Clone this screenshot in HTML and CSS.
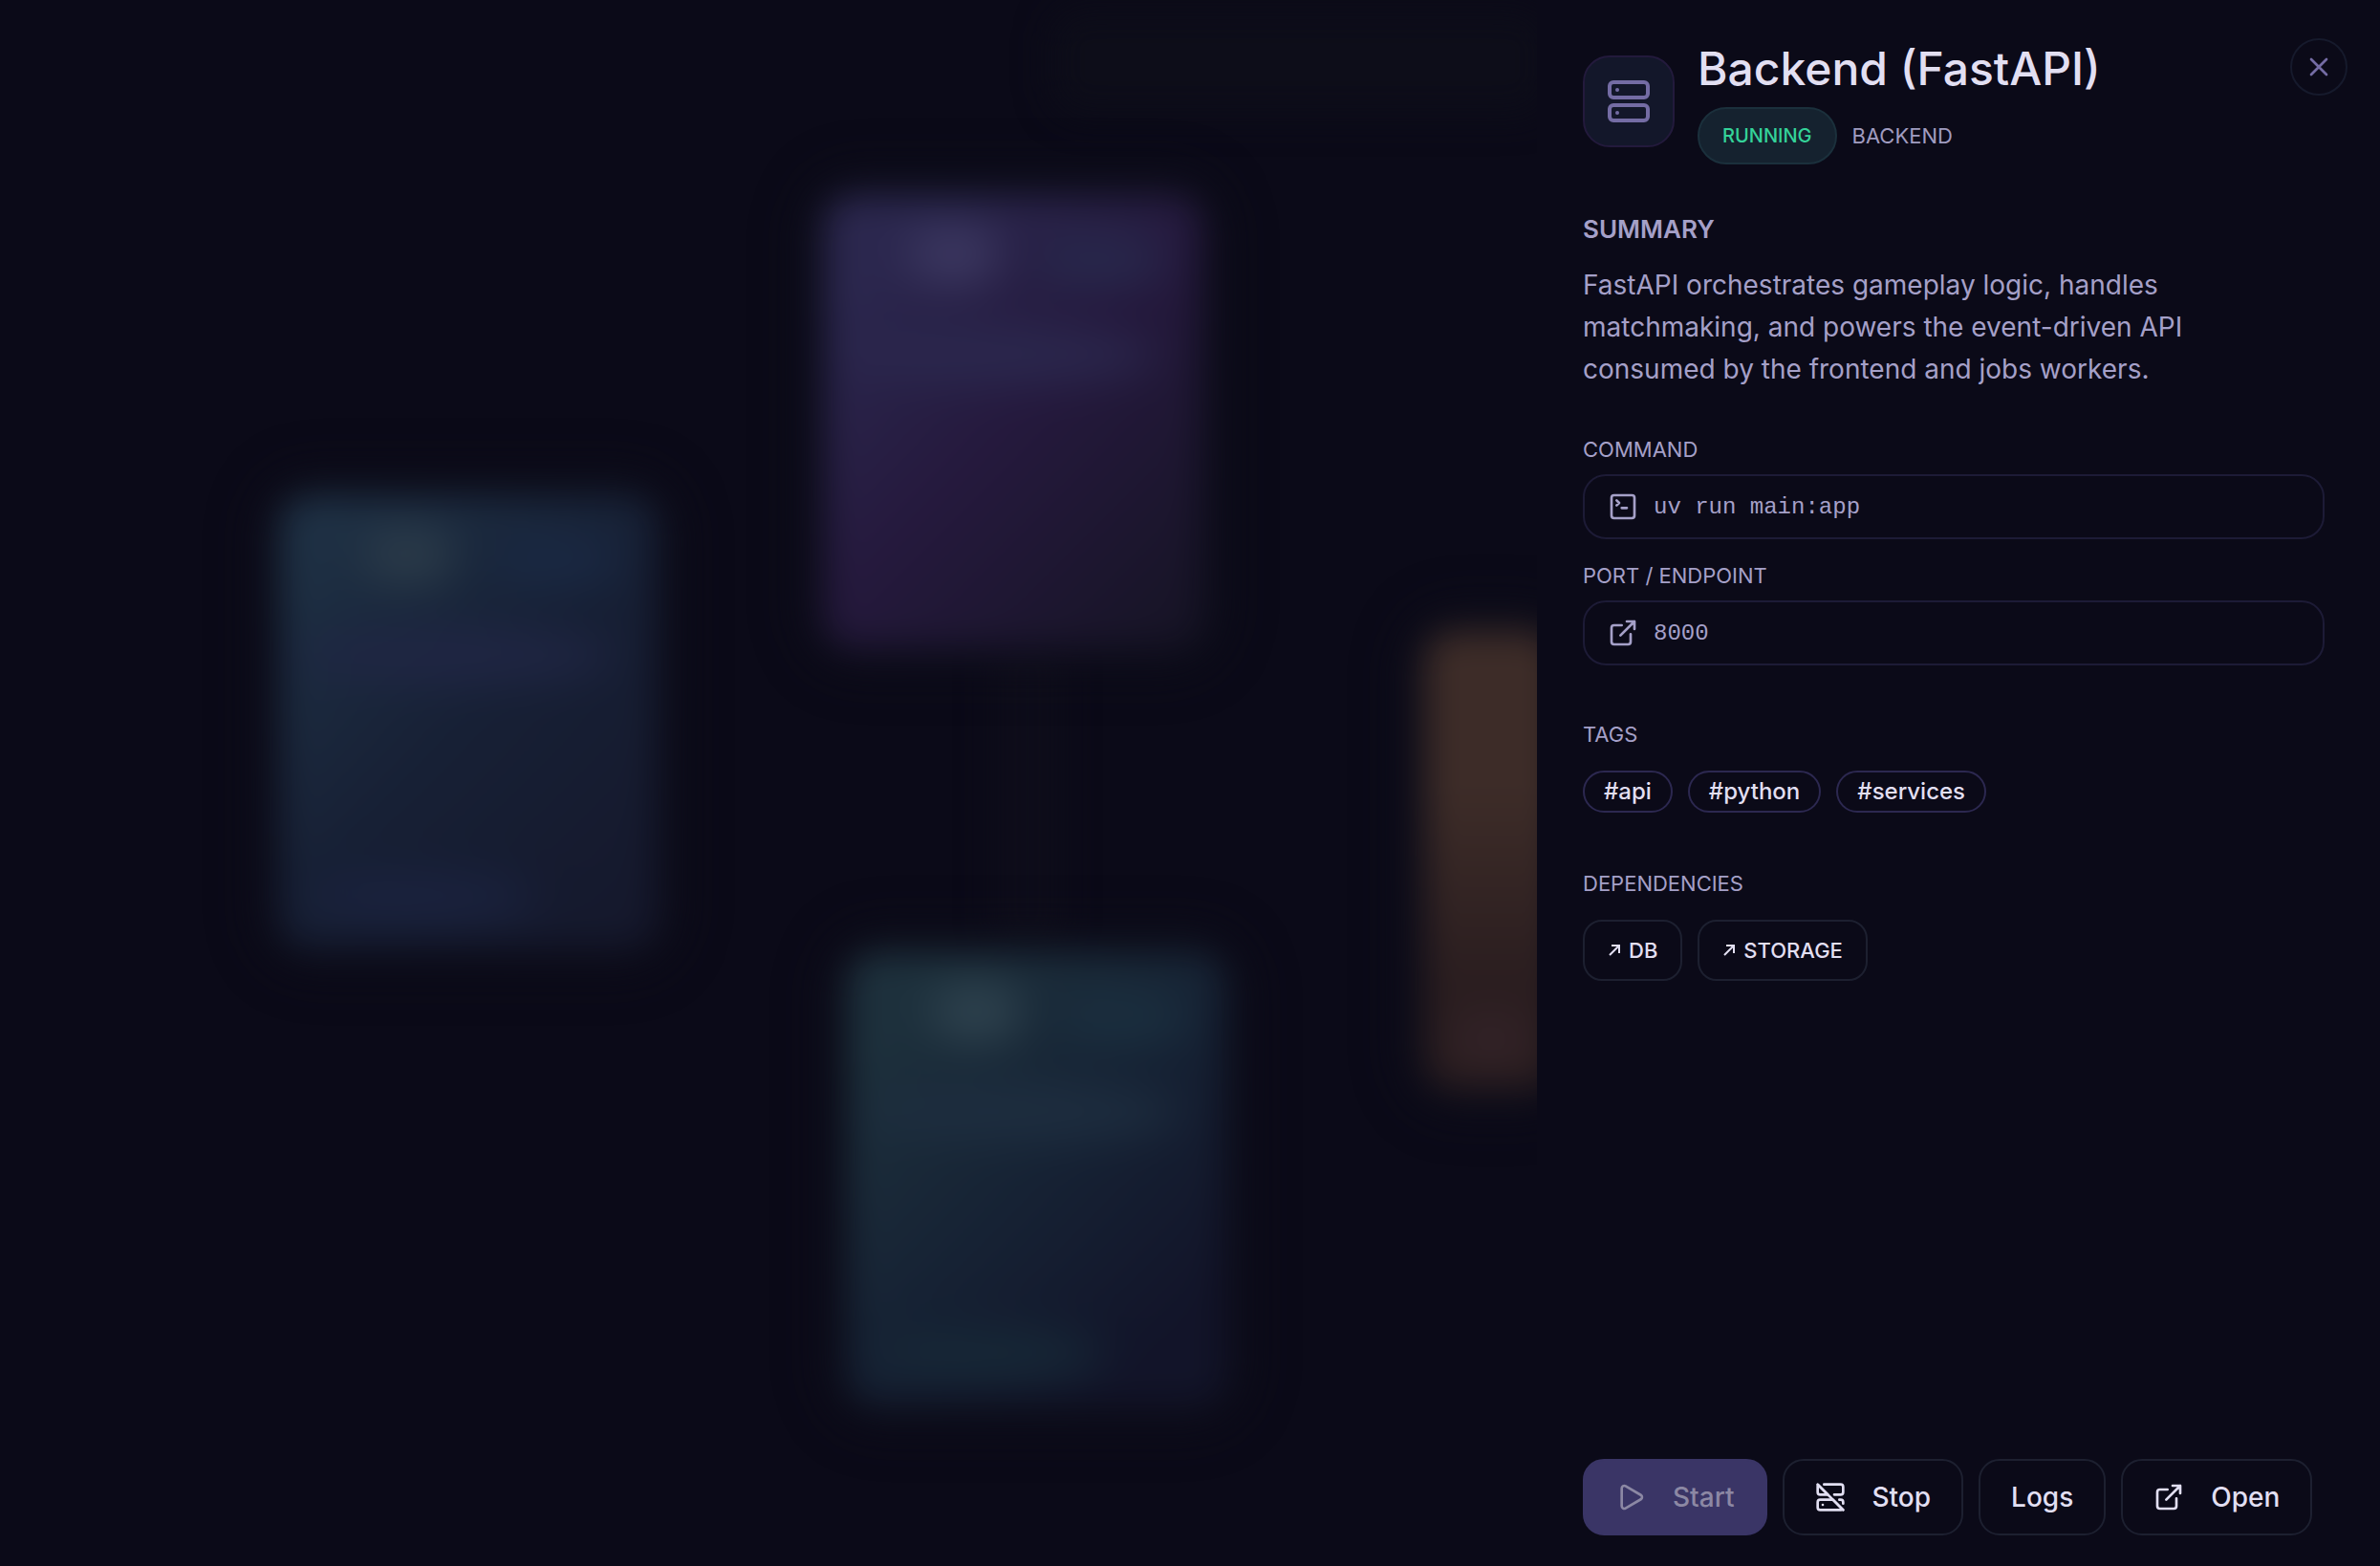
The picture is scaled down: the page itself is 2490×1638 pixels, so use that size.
FILE: index.html
```
<!DOCTYPE html>
<html lang="en">
<head>
    <meta charset="UTF-8">
    <meta name="viewport" content="width=device-width, initial-scale=1.0">
    <title>Service Map</title>
    <link rel="stylesheet" href="styles.css">
</head>
<body>
    <div class="app">
        <!-- Service map, dimmed and blurred while the panel is open -->
        <main class="map" aria-hidden="true">
            <div class="node node-toolbar"></div>
            <div class="node node-link"></div>
            <div class="node node-purple">
                <span class="glow glow-icon"></span>
                <span class="glow glow-badge"></span>
                <span class="glow glow-title"></span>
            </div>
            <div class="node node-blue">
                <span class="glow glow-icon"></span>
                <span class="glow glow-badge"></span>
                <span class="glow glow-title"></span>
                <span class="glow glow-footer"></span>
            </div>
            <div class="node node-teal">
                <span class="glow glow-icon"></span>
                <span class="glow glow-badge"></span>
                <span class="glow glow-title"></span>
                <span class="glow glow-footer"></span>
            </div>
            <div class="node node-orange">
                <span class="glow glow-footer"></span>
            </div>
        </main>

        <aside class="panel" aria-labelledby="panel-title">
            <header class="panel-header">
                <div class="service-icon">
                    <svg class="icon icon-large" viewBox="0 0 24 24">
                        <rect x="2" y="2" width="20" height="8" rx="2"/>
                        <rect x="2" y="14" width="20" height="8" rx="2"/>
                        <path d="M6 6h.01M6 18h.01"/>
                    </svg>
                </div>
                <div class="heading">
                    <h1 id="panel-title">Backend (FastAPI)</h1>
                    <div class="status-row">
                        <span class="status">RUNNING</span>
                        <span class="kind">BACKEND</span>
                    </div>
                </div>
                <button type="button" class="close" aria-label="Close">
                    <svg class="icon" viewBox="0 0 24 24"><path d="M18 6 6 18M6 6l12 12"/></svg>
                </button>
            </header>

            <div class="panel-body">
                <section class="summary">
                    <h2>SUMMARY</h2>
                    <p>FastAPI orchestrates gameplay logic, handles matchmaking, and powers the event-driven API consumed by the frontend and jobs workers.</p>
                </section>

                <section class="fields">
                    <div class="field">
                        <h3>COMMAND</h3>
                        <div class="field-box">
                            <svg class="icon" viewBox="0 0 24 24">
                                <rect x="3" y="3" width="18" height="18" rx="2"/>
                                <path d="m7 7 2 2-2 2M11 13h4"/>
                            </svg>
                            <code>uv run main:app</code>
                        </div>
                    </div>
                    <div class="field">
                        <h3>PORT / ENDPOINT</h3>
                        <div class="field-box">
                            <svg class="icon" viewBox="0 0 24 24">
                                <path d="M15 3h6v6M10 14 21 3M18 13v6a2 2 0 0 1-2 2H5a2 2 0 0 1-2-2V8a2 2 0 0 1 2-2h6"/>
                            </svg>
                            <code>8000</code>
                        </div>
                    </div>
                </section>

                <section class="group">
                    <h3>TAGS</h3>
                    <div class="chips">
                        <span class="tag">#api</span>
                        <span class="tag">#python</span>
                        <span class="tag">#services</span>
                    </div>
                </section>

                <section class="group">
                    <h3>DEPENDENCIES</h3>
                    <div class="chips">
                        <button type="button" class="dependency"><svg class="arrow" viewBox="0 0 14 14"><path d="M2 12 12 2M4 2h8v8"/></svg>DB</button>
                        <button type="button" class="dependency"><svg class="arrow" viewBox="0 0 14 14"><path d="M2 12 12 2M4 2h8v8"/></svg>STORAGE</button>
                    </div>
                </section>
            </div>

            <footer class="actions">
                <button type="button" class="action action-primary" disabled>
                    <svg class="icon" viewBox="0 0 24 24"><path d="M5 5a2 2 0 0 1 3-1.7l12 7a2 2 0 0 1 0 3.400l-12 7A2 2 0 0 1 5 19z"/></svg>
                    Start
                </button>
                <button type="button" class="action">
                    <svg class="icon" viewBox="0 0 24 24">
                        <path d="M7 2h13a2 2 0 0 1 2 2v4a2 2 0 0 1-2 2h-5"/>
                        <path d="M10 10 2.5 2.5C2 2 2 2.5 2 5v3a2 2 0 0 0 2 2h6z"/>
                        <path d="M22 17v-1a2 2 0 0 0-2-2h-1"/>
                        <path d="M4 14a2 2 0 0 0-2 2v4a2 2 0 0 0 2 2h16.5l1-.5.5.5-8-8H4z"/>
                        <path d="M6 18h.01M2 2l20 20"/>
                    </svg>
                    Stop
                </button>
                <button type="button" class="action">Logs</button>
                <button type="button" class="action">
                    <svg class="icon" viewBox="0 0 24 24">
                        <path d="M15 3h6v6M10 14 21 3M18 13v6a2 2 0 0 1-2 2H5a2 2 0 0 1-2-2V8a2 2 0 0 1 2-2h6"/>
                    </svg>
                    Open
                </button>
            </footer>
        </aside>
    </div>
</body>
</html>
```
FILE: styles.css
```
* {
    box-sizing: border-box;
}

body {
    margin: 0;
    background-color: #0b0a18;
    color: #e2dff2;
    font-family: Inter, "Liberation Sans", sans-serif;
}

h1, h2, h3, p {
    margin: 0;
}

button {
    background: none;
    color: inherit;
    font-family: inherit;
    cursor: pointer;
}

.app {
    display: flex;
    min-height: 100vh;
}

/* Blurred map */
.map {
    position: relative;
    flex: 1;
    overflow: hidden;
}

.node {
    position: absolute;
    width: 396px;
    height: 474px;
    border-radius: 32px;
    box-shadow: 0 0 30px 20px #0e0e1a;
    filter: blur(18px);
}

.node-toolbar {
    left: 1100px;
    top: 10px;
    width: 520px;
    height: 110px;
    background-color: #0d0d19;
    box-shadow: none;
}

.node-link {
    left: 1040px;
    top: 660px;
    width: 70px;
    height: 340px;
    background-color: #0e0d1a;
    box-shadow: none;
}

.node-purple {
    left: 862px;
    top: 204px;
    background: linear-gradient(135deg, #2b274e 15%, #25193d 50%, #171426 95%);
}

.node-blue {
    left: 292px;
    top: 518px;
    background: linear-gradient(135deg, #1e3044 10%, #172035 50%, #15182c 95%);
}

.node-teal {
    left: 886px;
    top: 996px;
    background: linear-gradient(135deg, #1d303c 15%, #162234 50%, #121429 85%);
}

.node-orange {
    left: 1490px;
    top: 660px;
    width: 140px;
    height: 480px;
    background: linear-gradient(180deg, #3d2c28 35%, #2b1e20 75%);
}

.glow {
    position: absolute;
    border-radius: 50%;
    filter: blur(16px);
}

.glow-icon {
    left: 86px;
    top: 34px;
    width: 100px;
    height: 58px;
    background-color: #3d3962;
}

.glow-badge {
    left: 220px;
    top: 44px;
    width: 140px;
    height: 50px;
    background-color: #28294d;
}

.glow-title {
    left: 20px;
    top: 140px;
    width: 330px;
    height: 56px;
    background-color: #2b284e;
}

.glow-footer {
    left: 30px;
    bottom: 30px;
    width: 240px;
    height: 46px;
    background-color: #1b2340;
}

.node-blue .glow-icon {
    background-color: #2c3c4a;
}

.node-blue .glow-badge {
    background-color: #1a2944;
}

.node-blue .glow-title {
    background-color: #202644;
}

.node-teal .glow-icon {
    background-color: #304450;
}

.node-teal .glow-badge {
    background-color: #1b3040;
}

.node-teal .glow-title {
    background-color: #1e2e40;
}

.node-teal .glow-footer {
    background-color: #172a38;
}

.node-orange .glow-footer {
    width: 80px;
    background-color: #35242a;
}

/* Details panel */
.panel {
    display: flex;
    flex-direction: column;
    width: 882px;
    padding: 40px 34px 32px 48px;
}

.icon {
    width: 32px;
    height: 32px;
    flex: none;
    fill: none;
    stroke: currentColor;
    stroke-width: 2;
    stroke-linecap: round;
    stroke-linejoin: round;
}

.panel-header {
    display: flex;
    align-items: flex-start;
    gap: 24px;
}

.service-icon {
    display: flex;
    align-items: center;
    justify-content: center;
    width: 96px;
    height: 96px;
    margin-top: 18px;
    border: 2px solid #231a3c;
    border-radius: 28px;
    background-color: #13172a;
    color: #746ca4;
}

.icon-large {
    width: 48px;
    height: 48px;
}

.heading {
    flex: 1;
}

h1 {
    font-size: 48px;
    font-weight: 500;
    line-height: 64px;
}

.status-row {
    display: flex;
    align-items: center;
    gap: 16px;
    margin-top: 8px;
}

.status {
    padding: 0 24px;
    border: 2px solid #1b303c;
    border-radius: 30px;
    background-color: #15222f;
    color: #34d399;
    font-size: 20px;
    font-weight: 500;
    line-height: 56px;
}

.kind {
    color: #a09cc0;
    font-size: 22px;
}

.close {
    display: flex;
    align-items: center;
    justify-content: center;
    width: 60px;
    height: 60px;
    padding: 0;
    border: 2px solid #161a2c;
    border-radius: 50%;
    color: #746ca4;
}

.panel-body {
    flex: 1;
    padding-right: 24px;
    color: #a5a0c8;
}

.summary {
    margin-top: 52px;
}

h2 {
    font-size: 26px;
    font-weight: 600;
    line-height: 32px;
}

.summary p {
    max-width: 680px;
    margin-top: 20px;
    font-size: 28px;
    line-height: 44px;
}

h3 {
    font-size: 22px;
    font-weight: 400;
    line-height: 32px;
}

.fields {
    display: grid;
    gap: 22px;
    margin-top: 46px;
}

.field-box {
    display: flex;
    align-items: center;
    gap: 16px;
    height: 68px;
    margin-top: 10px;
    padding: 0 24px;
    border: 2px solid #1d1b36;
    border-radius: 24px;
}

code {
    font-family: "Liberation Mono", monospace;
    font-size: 24px;
}

.group {
    margin-top: 56px;
}

.group + .group {
    margin-top: 58px;
}

.chips {
    display: flex;
    gap: 16px;
    margin-top: 22px;
    color: #e2dff2;
}

.tag {
    padding: 0 20px;
    border: 2px solid #2c2850;
    border-radius: 22px;
    font-size: 24px;
    font-weight: 500;
    line-height: 40px;
}

.dependency {
    display: flex;
    align-items: center;
    gap: 8px;
    height: 64px;
    padding: 0 24px;
    border: 2px solid #1d2030;
    border-radius: 20px;
    font-size: 22px;
    font-weight: 500;
}

.arrow {
    width: 14px;
    height: 14px;
    fill: none;
    stroke: currentColor;
    stroke-width: 2;
}

.actions {
    display: flex;
    gap: 16px;
}

.action {
    display: flex;
    align-items: center;
    gap: 28px;
    height: 80px;
    padding: 0 32px;
    border: 2px solid #1d2030;
    border-radius: 22px;
    font-size: 28px;
    font-weight: 500;
}

.action-primary {
    border-color: #3a3566;
    background-color: #3a3566;
    color: #8c88a4;
    cursor: default;
}
```
